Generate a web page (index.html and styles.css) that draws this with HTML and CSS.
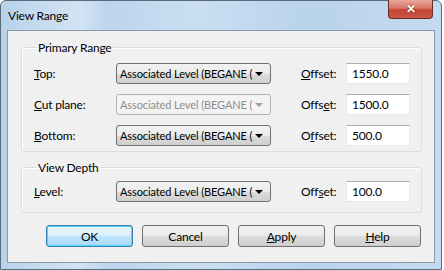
FILE: index.html
```html
<!DOCTYPE html>
<html lang="en">
<head>
  <meta charset="UTF-8" />
  <title>View Range</title>
  <link rel="stylesheet" href="styles.css">
</head>
<body>
  <div class="ventana">
    <div class="barra-titulo">
      <span class="titulo">View Range</span>
      <button class="cerrar" type="button">&#x2715;</button>
    </div>

    <div class="cliente">
      <fieldset class="grupo">
        <legend>Primary Range</legend>
        <div class="fila">
          <label><u>T</u>op:</label>
          <div class="combo"><span>Associated Level (BEGANE (</span><i class="flecha"></i></div>
          <label class="lbl-offset"><u>O</u>ffset:</label>
          <div class="caja">1550.0</div>
        </div>
        <div class="fila">
          <label><u>C</u>ut plane:</label>
          <div class="combo deshabilitado"><span>Associated Level (BEGANE (</span><i class="flecha"></i></div>
          <label class="lbl-offset">Offs<u>e</u>t:</label>
          <div class="caja">1500.0</div>
        </div>
        <div class="fila">
          <label><u>B</u>ottom:</label>
          <div class="combo"><span>Associated Level (BEGANE (</span><i class="flecha"></i></div>
          <label class="lbl-offset">O<u>f</u>fset:</label>
          <div class="caja">500.0</div>
        </div>
      </fieldset>

      <fieldset class="grupo profundidad">
        <legend>View Depth</legend>
        <div class="fila">
          <label><u>L</u>evel:</label>
          <div class="combo"><span>Associated Level (BEGANE (</span><i class="flecha"></i></div>
          <label class="lbl-offset">Off<u>s</u>et:</label>
          <div class="caja">100.0</div>
        </div>
      </fieldset>

      <div class="botones">
        <button type="button" class="boton defecto">OK</button>
        <button type="button" class="boton">Cancel</button>
        <button type="button" class="boton"><u>A</u>pply</button>
        <button type="button" class="boton"><u>H</u>elp</button>
      </div>
    </div>
  </div>
</body>
</html>
```

FILE: styles.css
```css
html, body {
  margin: 0;
  padding: 0;
}
body {
  width: 444px;
  height: 270px;
  overflow: hidden;
  font-family: Lato, "Noto Sans", sans-serif;
  font-size: 12px;
  letter-spacing: -0.2px;
  color: #000;
}
.ventana {
  box-sizing: border-box;
  width: 442px;
  height: 270px;
  border: 1px solid #5a6a7c;
  border-radius: 6px 6px 0 0;
  background: linear-gradient(90deg, #b8d2ea 0%, #d2e4f4 18%, #bcd5ec 24%, #c9def2 45%, #b9d3ec 70%, #c4dbf0 100%);
  padding: 0 6px 6px 6px;
  display: flex;
  flex-direction: column;
}
.barra-titulo {
  height: 29px;
  display: flex;
  align-items: flex-start;
  justify-content: space-between;
}
.titulo {
  margin-top: 7px;
  margin-left: 1px;
  font-size: 12px;
  color: #000;
}
.cerrar {
  width: 45px;
  height: 19px;
  margin-top: -1px;
  margin-right: 2px;
  border: 1px solid #6b2a22;
  border-top: none;
  border-radius: 0 0 4px 4px;
  background: linear-gradient(#e8a89c 0%, #d8786a 45%, #c24331 55%, #c9594a 100%);
  color: #fff;
  font-size: 12px;
  font-weight: bold;
  line-height: 16px;
  padding: 0;
  text-shadow: 0 0 2px #5a1a12;
}
.cliente {
  flex: 1;
  background: #f0f0f0;
  border: 1px solid #8a9aa8;
  padding: 9px 12px 0 13px;
}
.grupo {
  margin: 0;
  border: 1px solid #d5dfe5;
  border-radius: 3px;
  box-shadow: inset 1px 1px 0 #fff;
  padding: 3px 0 0 12px;
}
.grupo legend {
  padding: 0 2px;
  margin-left: 2px;
  color: #000;
}
.profundidad {
  margin-top: 8px;
  padding-top: 1px;
  padding-bottom: 5px;
}
.fila {
  display: flex;
  align-items: center;
  height: 31px;
}
.fila label {
  width: 82px;
}
.combo {
  box-sizing: border-box;
  width: 155px;
  height: 21px;
  border: 1px solid #707070;
  border-radius: 3px;
  background: linear-gradient(#f2f2f2 0%, #ebebeb 50%, #dddddd 51%, #cfcfcf 100%);
  display: flex;
  align-items: center;
  padding-left: 3px;
}
.combo span {
  flex: 1;
  min-width: 0;
  white-space: nowrap;
  font-size: 11px;
  letter-spacing: -0.1px;
}
.flecha {
  flex: none;
  width: 0;
  height: 0;
  border-left: 4px solid transparent;
  border-right: 4px solid transparent;
  border-top: 4px solid #000;
  margin: 0 7px 0 3px;
}
.deshabilitado {
  border-color: #adb2b5;
  background: #f4f4f4;
  color: #8d8d8d;
}
.deshabilitado .flecha {
  border-top-color: #a0a0a0;
}
.fila .lbl-offset {
  margin-left: 30px;
  width: 45px;
}
.caja {
  box-sizing: border-box;
  width: 64px;
  height: 21px;
  background: #fff;
  border: 1px solid #e3e9ef;
  border-top-color: #abadb3;
  padding: 2px 0 0 5px;
}
.botones {
  display: flex;
  justify-content: flex-end;
  gap: 9px;
  margin-top: 12px;
  padding-right: 1px;
}
.boton {
  box-sizing: border-box;
  width: 87px;
  height: 22px;
  border: 1px solid #707070;
  border-radius: 3px;
  background: linear-gradient(#f2f2f2 0%, #ebebeb 50%, #dddddd 51%, #cfcfcf 100%);
  font-family: inherit;
  font-size: 12px;
  letter-spacing: -0.2px;
  color: #000;
  padding: 0;
}
.defecto {
  border-color: #3c7fb1;
  box-shadow: inset 0 0 0 1px #48d8fb;
  background: linear-gradient(#eaf6fd 0%, #d9f0fc 50%, #bee6fd 51%, #a7d9f5 100%);
}
```
